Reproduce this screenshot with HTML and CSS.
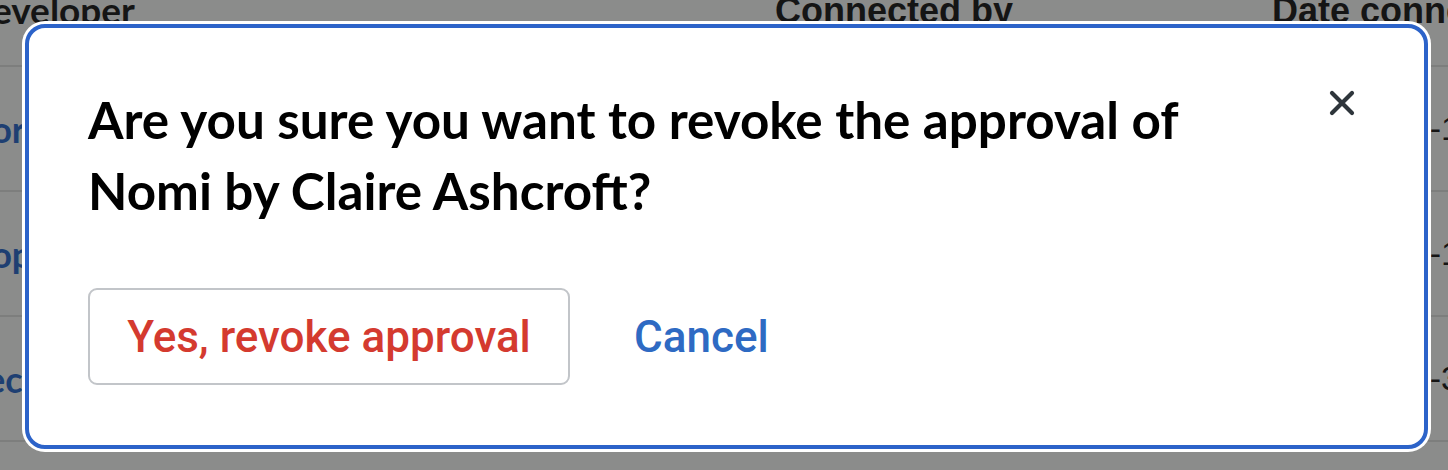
FILE: index.html
```html
<!DOCTYPE html>
<html lang="en">
<head>
<meta charset="utf-8">
<title>Revoke approval</title>
<link rel="stylesheet" href="styles.css">
</head>
<body>
<div class="backdrop">
  <div class="table">
    <div class="row head">
      <div class="cell c1">Developer</div>
      <div class="cell c2">Connected by</div>
      <div class="cell c3">Date connected</div>
    </div>
    <div class="row">
      <div class="cell c1 link">Dora AI</div>
      <div class="cell c2">Claire Ashcroft</div>
      <div class="cell c3 date">2024-11-04</div>
    </div>
    <div class="row">
      <div class="cell c1 link">Hopper</div>
      <div class="cell c2">Claire Ashcroft</div>
      <div class="cell c3 date">2024-10-21</div>
    </div>
    <div class="row">
      <div class="cell c1 link">Recall</div>
      <div class="cell c2">Claire Ashcroft</div>
      <div class="cell c3 date">2024-3-09</div>
    </div>
  </div>
</div>

<div class="dialog" role="dialog" aria-modal="true">
  <div class="dialog-head">
    <h2 class="title">Are you sure you want to revoke the approval of Nomi by Claire Ashcroft?</h2>
    <button class="close" aria-label="Close">
      <svg width="26" height="26" viewBox="0 0 26 26"><path d="M3 3 L23 23 M23 3 L3 23" stroke="#2e353b" stroke-width="4.2" stroke-linecap="round" fill="none"/></svg>
    </button>
  </div>
  <div class="actions">
    <button class="btn revoke">Yes, revoke approval</button>
    <button class="btn cancel">Cancel</button>
  </div>
</div>
</body>
</html>
```
FILE: styles.css
```css
html, body {
  margin: 0;
  padding: 0;
  height: 100%;
  overflow: hidden;
}
body {
  background: #8b8c8b;
  font-family: "Liberation Sans", Arial, sans-serif;
  position: relative;
}
.backdrop {
  overflow: hidden;
  height: 100%;
}
.table {
  margin-top: -44px;
  margin-left: -36px;
}
.row {
  display: grid;
  grid-template-columns: 811px 497px 1fr;
  height: 125px;
  align-items: center;
  border-bottom: 2px solid #7d7e7d;
  box-sizing: border-box;
  white-space: nowrap;
  font-size: 34px;
  color: #151515;
}
.row.head {
  height: 111px;
  align-items: end;
  padding-bottom: 43px;
}
.head .cell {
  position: relative;
  top: 10px;
}
.head .c1 {
  font-family: "Lato", sans-serif;
  font-weight: 700;
  font-size: 37px;
}
.head .c2, .head .c3 {
  font-weight: 700;
  font-size: 36px;
}
.link {
  color: #1e3f72;
  font-family: "Lato", sans-serif;
  font-weight: 700;
  font-size: 36px;
}
.date {
  padding-left: 82px;
}

.dialog {
  position: absolute;
  left: 25px;
  top: 24px;
  width: 1403px;
  height: 425px;
  box-sizing: border-box;
  background: #fff;
  border: 4px solid #2c63c9;
  border-radius: 20px;
  box-shadow: 0 0 0 3px #ffffff;
  padding: 56px 50px 0 59px;
}
.dialog-head {
  display: flex;
  justify-content: space-between;
  align-items: flex-start;
}
.title {
  margin: 0;
  max-width: 1150px;
  font-family: "Lato", sans-serif;
  font-weight: 700;
  font-size: 51.2px;
  line-height: 71px;
  color: #000;
}
.close {
  border: 0;
  background: none;
  padding: 0;
  margin: 6px 19px 0 0;
  width: 26px;
  height: 26px;
  cursor: pointer;
  display: flex;
}
.actions {
  display: flex;
  align-items: center;
  gap: 64px;
  margin-top: 62px;
}
.btn {
  font-family: "Roboto", "Liberation Sans", sans-serif;
  font-weight: 500;
  font-size: 44px;
  background: #fff;
  cursor: pointer;
}
.revoke {
  width: 482px;
  height: 97px;
  border: 2px solid #c2c5c9;
  border-radius: 9px;
  color: #d43a2f;
  padding: 0;
}
.cancel {
  border: 0;
  padding: 0;
  color: #2e6ac3;
}
```
